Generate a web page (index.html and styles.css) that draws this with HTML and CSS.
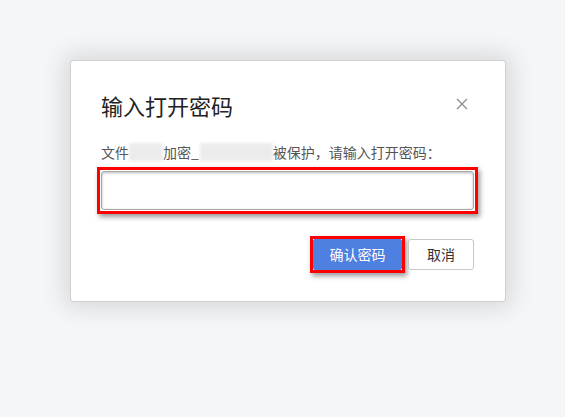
FILE: index.html
```html
<!DOCTYPE html>
<html lang="zh-CN">
<head>
<meta charset="utf-8">
<title>输入打开密码</title>
<link rel="stylesheet" href="styles.css">
</head>
<body>
<div class="dialog">
  <div class="header">
    <div class="title">输入打开密码</div>
    <button class="close" aria-label="关闭">
      <svg width="12" height="12" viewBox="0 0 12 12"><path d="M1 1L11 11M11 1L1 11" stroke="#8a8a8a" stroke-width="1.2" fill="none"/></svg>
    </button>
  </div>
  <div class="label">文件<span class="blur b1"></span>加密_<span class="blur b2"></span>被保护，请输入打开密码：</div>
  <div class="field"><input class="input" type="password"></div>
  <div class="actions">
    <span class="mark"><button class="btn primary">确认密码</button></span>
    <button class="btn">取消</button>
  </div>
</div>
</body>
</html>
```
FILE: styles.css
```css
html, body {
  margin: 0;
  padding: 0;
}
body {
  background: #f5f6f8;
  font-family: "Microsoft YaHei", "Noto Sans CJK SC", "Noto Sans", sans-serif;
  padding: 60px 0 0 70px;
  height: 417px;
  box-sizing: border-box;
  overflow: hidden;
}
.dialog {
  width: 436px;
  height: 242px;
  box-sizing: border-box;
  background: #fff;
  border: 1px solid #cfcfd2;
  border-radius: 3px;
  box-shadow: 0 0 24px 6px rgba(0, 0, 0, 0.12);
  padding: 29px 31px 0 30px;
}
.header {
  display: flex;
  align-items: center;
  justify-content: space-between;
  height: 30px;
}
.title {
  font-size: 22px;
  line-height: 30px;
  color: #222;
}
.close {
  border: 0;
  background: none;
  padding: 0;
  width: 14px;
  height: 14px;
  display: flex;
  align-items: center;
  justify-content: center;
  margin-right: 5px;
  margin-top: -3px;
}
.label {
  margin-top: 22px;
  font-size: 14px;
  line-height: 20px;
  color: #555;
  display: flex;
  align-items: center;
}
.blur {
  display: inline-block;
  height: 18px;
  background: #ececec;
  filter: blur(1.5px);
}
.b1 { width: 34px; }
.b2 { width: 73px; margin-left: 1px; }
.field {
  margin: 5px -4px 0;
  border: 3px solid #ff0000;
  padding: 1px;
  background: #fff;
  box-shadow: 2px 3px 5px rgba(0, 0, 0, 0.4);
}
.input {
  display: block;
  width: 100%;
  height: 39px;
  box-sizing: border-box;
  border: 1px solid #a8a8a8;
  border-radius: 3px;
  background: #fff;
  box-shadow: inset 0 1px 3px rgba(0, 0, 0, 0.28);
  outline: none;
}
.actions {
  display: flex;
  justify-content: flex-end;
  align-items: flex-start;
  gap: 3px;
  margin-top: 22px;
}
.mark {
  display: block;
  border: 3px solid #ff0000;
  box-shadow: 2px 3px 5px rgba(0, 0, 0, 0.4);
}
.btn {
  display: block;
  height: 31px;
  box-sizing: border-box;
  border: 1px solid #c8c8c8;
  border-radius: 3px;
  background: #fff;
  color: #333;
  font-family: inherit;
  font-size: 14px;
  line-height: 29px;
  padding: 0;
  width: 66px;
  margin-top: 3px;
}
.primary {
  width: 89px;
  margin-top: 0;
  background: #4e80e1;
  border-color: #4e80e1;
  border-radius: 2px;
  color: #fff;
}
```
